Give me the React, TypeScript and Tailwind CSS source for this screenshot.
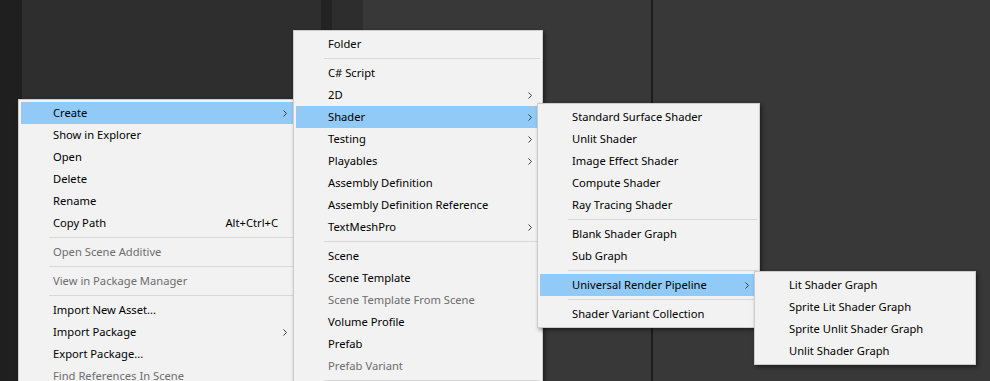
type Item =
  | { sep: true }
  | { label: string; arrow?: boolean; active?: boolean; disabled?: boolean; shortcut?: string; sep?: false };

const createMenu: Item[] = [
  { label: "Create", arrow: true, active: true },
  { label: "Show in Explorer" },
  { label: "Open" },
  { label: "Delete" },
  { label: "Rename" },
  { label: "Copy Path", shortcut: "Alt+Ctrl+C" },
  { sep: true },
  { label: "Open Scene Additive", disabled: true },
  { sep: true },
  { label: "View in Package Manager", disabled: true },
  { sep: true },
  { label: "Import New Asset..." },
  { label: "Import Package", arrow: true },
  { label: "Export Package..." },
  { label: "Find References In Scene", disabled: true },
];

const assetMenu: Item[] = [
  { label: "Folder" },
  { sep: true },
  { label: "C# Script" },
  { label: "2D", arrow: true },
  { label: "Shader", arrow: true, active: true },
  { label: "Testing", arrow: true },
  { label: "Playables", arrow: true },
  { label: "Assembly Definition" },
  { label: "Assembly Definition Reference" },
  { label: "TextMeshPro", arrow: true },
  { sep: true },
  { label: "Scene" },
  { label: "Scene Template" },
  { label: "Scene Template From Scene", disabled: true },
  { label: "Volume Profile" },
  { label: "Prefab" },
  { label: "Prefab Variant", disabled: true },
  { sep: true },
];

const shaderMenu: Item[] = [
  { label: "Standard Surface Shader" },
  { label: "Unlit Shader" },
  { label: "Image Effect Shader" },
  { label: "Compute Shader" },
  { label: "Ray Tracing Shader" },
  { sep: true },
  { label: "Blank Shader Graph" },
  { label: "Sub Graph" },
  { sep: true },
  { label: "Universal Render Pipeline", arrow: true, active: true },
  { sep: true },
  { label: "Shader Variant Collection" },
];

const urpMenu: Item[] = [
  { label: "Lit Shader Graph" },
  { label: "Sprite Lit Shader Graph" },
  { label: "Sprite Unlit Shader Graph" },
  { label: "Unlit Shader Graph" },
];

function Chevron() {
  return (
    <svg width="4" height="7" viewBox="0 0 4 7" className="shrink-0">
      <path d="M0.5 0.5 L3.5 3.5 L0.5 6.5" fill="none" stroke="#3c3c3c" strokeWidth="1" />
    </svg>
  );
}

function Menu({ items, className }: { items: Item[]; className: string }) {
  return (
    <div
      className={`absolute bg-[#f2f2f2] border border-[#cccccc] p-[2px] shadow-[2px_2px_4px_rgba(0,0,0,0.45)] ${className}`}
    >
      {items.map((it, i) =>
        it.sep ? (
          <div key={i} className="h-[7px] flex items-center pl-[28px]">
            <div className="h-px w-full bg-[#d7d7d7]" />
          </div>
        ) : (
          <div
            key={i}
            className={`flex items-center h-[22px] pl-[32px] pr-[8px] ${it.active ? "bg-[#91c9f7]" : ""} ${
              it.disabled ? "text-[#6d6d6d]" : "text-black"
            }`}
          >
            <span className="flex-1 whitespace-nowrap">{it.label}</span>
            {it.shortcut && <span className="whitespace-nowrap">{it.shortcut}</span>}
            <span className="w-[4px] ml-[5px] flex items-center">{it.arrow && <Chevron />}</span>
          </div>
        )
      )}
    </div>
  );
}

export default function App() {
  return (
    <div
      className="relative w-[990px] h-[381px] overflow-hidden text-[11.2px] leading-none"
      style={{ fontFamily: '"Noto Sans", "Open Sans", sans-serif' }}
    >
      <div className="flex h-full">
        <div className="w-[22px] bg-[#1f1f1f]" />
        <div className="w-[299px] bg-[#2e2e2e]" />
        <div className="w-[11px] bg-[#232323]" />
        <div className="w-[31px] bg-[#2d2d2d]" />
        <div className="w-[288px] bg-[#383838]" />
        <div className="w-[2px] bg-[#1c1c1c]" />
        <div className="flex-1 bg-[#383838]" />
      </div>

      <Menu items={createMenu} className="left-[18px] top-[99px] w-[280px]" />
      <Menu items={assetMenu} className="left-[293px] top-[30px] w-[250px]" />
      <Menu items={shaderMenu} className="left-[537px] top-[103px] w-[223px]" />
      <Menu items={urpMenu} className="left-[754px] top-[271px] w-[222px]" />
    </div>
  );
}
